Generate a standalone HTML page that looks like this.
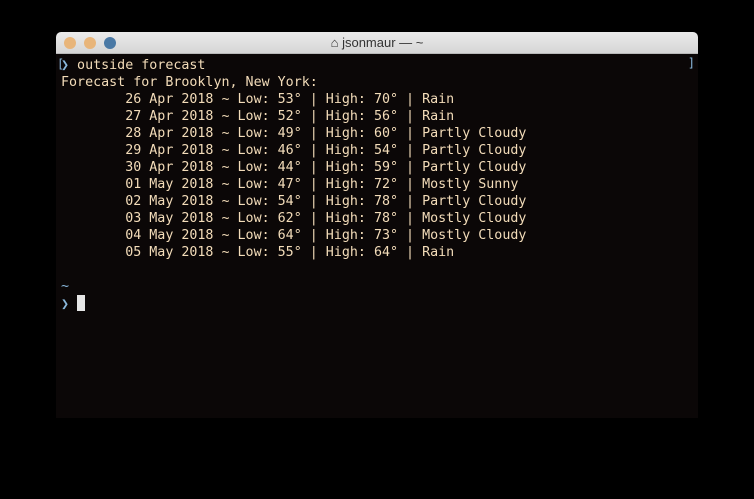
<!DOCTYPE html>
<html><head><style>
body{margin:0;background:#000;width:754px;height:499px;overflow:hidden;position:relative;font-family:"Liberation Sans",sans-serif}
.win{position:absolute;left:56px;top:32px;width:642px;height:386px;background:#0b0707;border-radius:5px 5px 0 0;overflow:hidden}
.tb{height:21px;background:linear-gradient(#ebebeb,#d6d6d6);border-bottom:1px solid #b8b8b8;position:relative}
.d{position:absolute;top:5px;width:12px;height:12px;border-radius:50%}
.title{position:absolute;left:0;right:0;top:3px;text-align:center;font-size:13px;color:#333}
pre{position:absolute;left:5px;top:25px;margin:0;font-family:"DejaVu Sans Mono",monospace;font-size:13.33px;line-height:17px;color:#f3dcb9}
.b{color:#8ab8dc}
.cur{display:inline-block;width:8px;height:16px;background:#e6e6e6;vertical-align:-3px}
.rb{position:absolute;right:3px;top:24px;color:#8ab8dc;font-family:"DejaVu Sans Mono",monospace;font-size:12px}
</style></head><body>
<div class="win">
<div class="tb">
<div class="d" style="left:8px;background:#e8b57a"></div>
<div class="d" style="left:28px;background:#e8b57a"></div>
<div class="d" style="left:48px;background:#4a79a5"></div>
<div class="title">⌂ jsonmaur — ~</div>
</div>
<div class="rb">]</div>
<pre><span class="b">❯</span> outside forecast
Forecast for Brooklyn, New York:
        26 Apr 2018 ~ Low: 53° | High: 70° | Rain
        27 Apr 2018 ~ Low: 52° | High: 56° | Rain
        28 Apr 2018 ~ Low: 49° | High: 60° | Partly Cloudy
        29 Apr 2018 ~ Low: 46° | High: 54° | Partly Cloudy
        30 Apr 2018 ~ Low: 44° | High: 59° | Partly Cloudy
        01 May 2018 ~ Low: 47° | High: 72° | Mostly Sunny
        02 May 2018 ~ Low: 54° | High: 78° | Partly Cloudy
        03 May 2018 ~ Low: 62° | High: 78° | Mostly Cloudy
        04 May 2018 ~ Low: 64° | High: 73° | Mostly Cloudy
        05 May 2018 ~ Low: 55° | High: 64° | Rain

<span class="b">~</span>
<span class="b">❯</span> <span class="cur"></span></pre>
<div style="position:absolute;left:1px;top:25px;color:#8ab8dc;font-family:'DejaVu Sans Mono',monospace;font-size:12px">[</div>
</div>
</body></html>
